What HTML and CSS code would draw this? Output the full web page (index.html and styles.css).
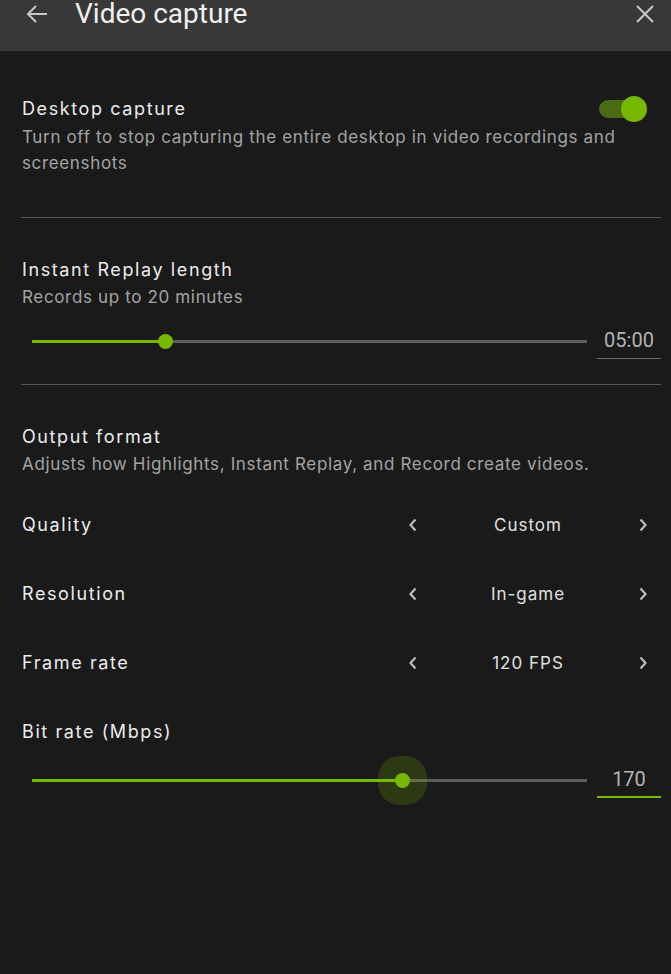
FILE: index.html
```html
<!DOCTYPE html>
<html lang="en">
<head>
    <meta charset="UTF-8">
    <meta name="viewport" content="width=device-width, initial-scale=1.0">
    <title>Video capture</title>
    <link rel="stylesheet" href="styles.css">
</head>
<body>

<div class="header">
    <div class="header-row">
        <svg class="back" width="24" height="24" viewBox="0 0 24 24"><path d="M22 12H4M11 4l-8 8 8 8" fill="none" stroke="#c8c8c8" stroke-width="2"/></svg>
        <span class="header-title">Video capture</span>
        <svg class="close" width="20" height="20" viewBox="0 0 20 20"><path d="M2 2l16 16M18 2L2 18" fill="none" stroke="#c8c8c8" stroke-width="2"/></svg>
    </div>
</div>

<div class="content">

    <div class="section first">
        <div class="title-row">
            <div class="title">Desktop capture</div>
            <div class="switch on">
                <div class="switch-track"></div>
                <div class="switch-thumb"></div>
            </div>
        </div>
        <div class="desc">Turn off to stop capturing the entire desktop in video recordings and screenshots</div>
    </div>

    <div class="divider"></div>

    <div class="section">
        <div class="title">Instant Replay length</div>
        <div class="desc">Records up to 20 minutes</div>
        <div class="slider-row replay">
            <div class="slider">
                <div class="track">
                    <div class="fill" style="width: 24.1%;"></div>
                    <div class="thumb" style="left: 24.1%;"></div>
                </div>
            </div>
            <div class="value">05:00</div>
        </div>
    </div>

    <div class="divider"></div>

    <div class="section">
        <div class="title">Output format</div>
        <div class="desc">Adjusts how Highlights, Instant Replay, and Record create videos.</div>

        <div class="options">
            <div class="option">
                <div class="title">Quality</div>
                <div class="picker">
                    <svg class="chev" width="10" height="14" viewBox="0 0 10 14"><path d="M7.5 1.5L2.5 7l5 5.5" fill="none" stroke="#bdbdbd" stroke-width="2.2"/></svg>
                    <span class="picker-value">Custom</span>
                    <svg class="chev" width="10" height="14" viewBox="0 0 10 14"><path d="M2.5 1.5l5 5.5-5 5.5" fill="none" stroke="#bdbdbd" stroke-width="2.2"/></svg>
                </div>
            </div>
            <div class="option">
                <div class="title">Resolution</div>
                <div class="picker">
                    <svg class="chev" width="10" height="14" viewBox="0 0 10 14"><path d="M7.5 1.5L2.5 7l5 5.5" fill="none" stroke="#bdbdbd" stroke-width="2.2"/></svg>
                    <span class="picker-value">In-game</span>
                    <svg class="chev" width="10" height="14" viewBox="0 0 10 14"><path d="M2.5 1.5l5 5.5-5 5.5" fill="none" stroke="#bdbdbd" stroke-width="2.2"/></svg>
                </div>
            </div>
            <div class="option">
                <div class="title">Frame rate</div>
                <div class="picker">
                    <svg class="chev" width="10" height="14" viewBox="0 0 10 14"><path d="M7.5 1.5L2.5 7l5 5.5" fill="none" stroke="#bdbdbd" stroke-width="2.2"/></svg>
                    <span class="picker-value">120 FPS</span>
                    <svg class="chev" width="10" height="14" viewBox="0 0 10 14"><path d="M2.5 1.5l5 5.5-5 5.5" fill="none" stroke="#bdbdbd" stroke-width="2.2"/></svg>
                </div>
            </div>
        </div>

        <div class="title bitrate">Bit rate (Mbps)</div>
        <div class="slider-row bitrate-row">
            <div class="slider">
                <div class="track">
                    <div class="fill" style="width: 66.7%;"></div>
                    <div class="thumb active" style="left: 66.7%;"></div>
                </div>
            </div>
            <div class="value focused">170</div>
        </div>
    </div>

</div>

</body>
</html>
```

FILE: styles.css
```css
body {
    font-family: Inter, "Liberation Sans", sans-serif;
    background-color: #1a1a1a;
    color: #e6e6e6;
    margin: 0;
    padding: 0;
    box-sizing: border-box;
}

.header {
    background-color: #383838;
    height: 51px;
}

.header-row {
    display: flex;
    align-items: center;
    height: 28px;
    padding: 0 16px 0 25px;
}

.back {
    margin-right: 26px;
}

.header-title {
    font-family: Roboto, sans-serif;
    font-size: 28px;
    line-height: 28px;
    color: #f0f0f0;
    flex: 1;
}

.content {
    padding: 45px 10px 160px 22px;
}

.title-row {
    display: flex;
    justify-content: space-between;
    align-items: center;
}

.title {
    font-size: 18px;
    line-height: 24px;
    letter-spacing: 1.6px;
    color: #ececec;
}

.desc {
    font-size: 17px;
    line-height: 26px;
    letter-spacing: 0.65px;
    color: #a4a4a4;
    margin-top: 2px;
    padding-right: 30px;
}

.divider {
    height: 1px;
    background-color: #555;
    margin: 41px 0 40px -1px;
}

.section + .divider {
    margin: 25px 0 40px -1px;
}

.first + .divider {
    margin: 41px 0 40px -1px;
}

/* toggle */
.switch {
    position: relative;
    width: 48px;
    height: 26px;
    margin-right: 14px;
}

.switch-track {
    position: absolute;
    left: 0;
    top: 4px;
    width: 38px;
    height: 18px;
    border-radius: 9px;
    background-color: #4a6b14;
}

.switch-thumb {
    position: absolute;
    right: 0;
    top: 0;
    width: 26px;
    height: 26px;
    border-radius: 50%;
    background-color: #76b900;
}

/* sliders */
.slider-row {
    display: flex;
    align-items: center;
    height: 36px;
    margin-top: 13px;
}

.slider {
    flex: 1;
    padding: 0 10px;
}

.track {
    position: relative;
    height: 3px;
    background-color: #5c5c5c;
}

.fill {
    height: 3px;
    background-color: #76b900;
}

.thumb {
    position: absolute;
    top: 50%;
    width: 15px;
    height: 15px;
    margin: -7.5px 0 0 -7.5px;
    border-radius: 50%;
    background-color: #76b900;
}

.thumb.active {
    box-shadow: 0 0 0 17px rgba(118, 185, 0, 0.2);
}

.value {
    width: 64px;
    height: 36px;
    box-sizing: border-box;
    border-bottom: 1px solid #6a6a6a;
    text-align: center;
    font-family: Roboto, sans-serif;
    font-size: 20px;
    line-height: 34px;
    color: #b4b4b4;
}

.value.focused {
    border-bottom: 2px solid #76b900;
}

/* pickers */
.options {
    margin-top: 13px;
}

.option {
    display: flex;
    align-items: center;
    justify-content: space-between;
    height: 69px;
}

.picker {
    display: grid;
    grid-template-columns: 26px 1fr 26px;
    align-items: center;
    justify-items: center;
    width: 256px;
    margin-right: 5px;
}

.picker-value {
    font-size: 17px;
    letter-spacing: 1px;
    color: #e0e0e0;
}

.bitrate {
    margin-top: 23px;
}

.bitrate-row {
    margin-top: 18px;
}
```
